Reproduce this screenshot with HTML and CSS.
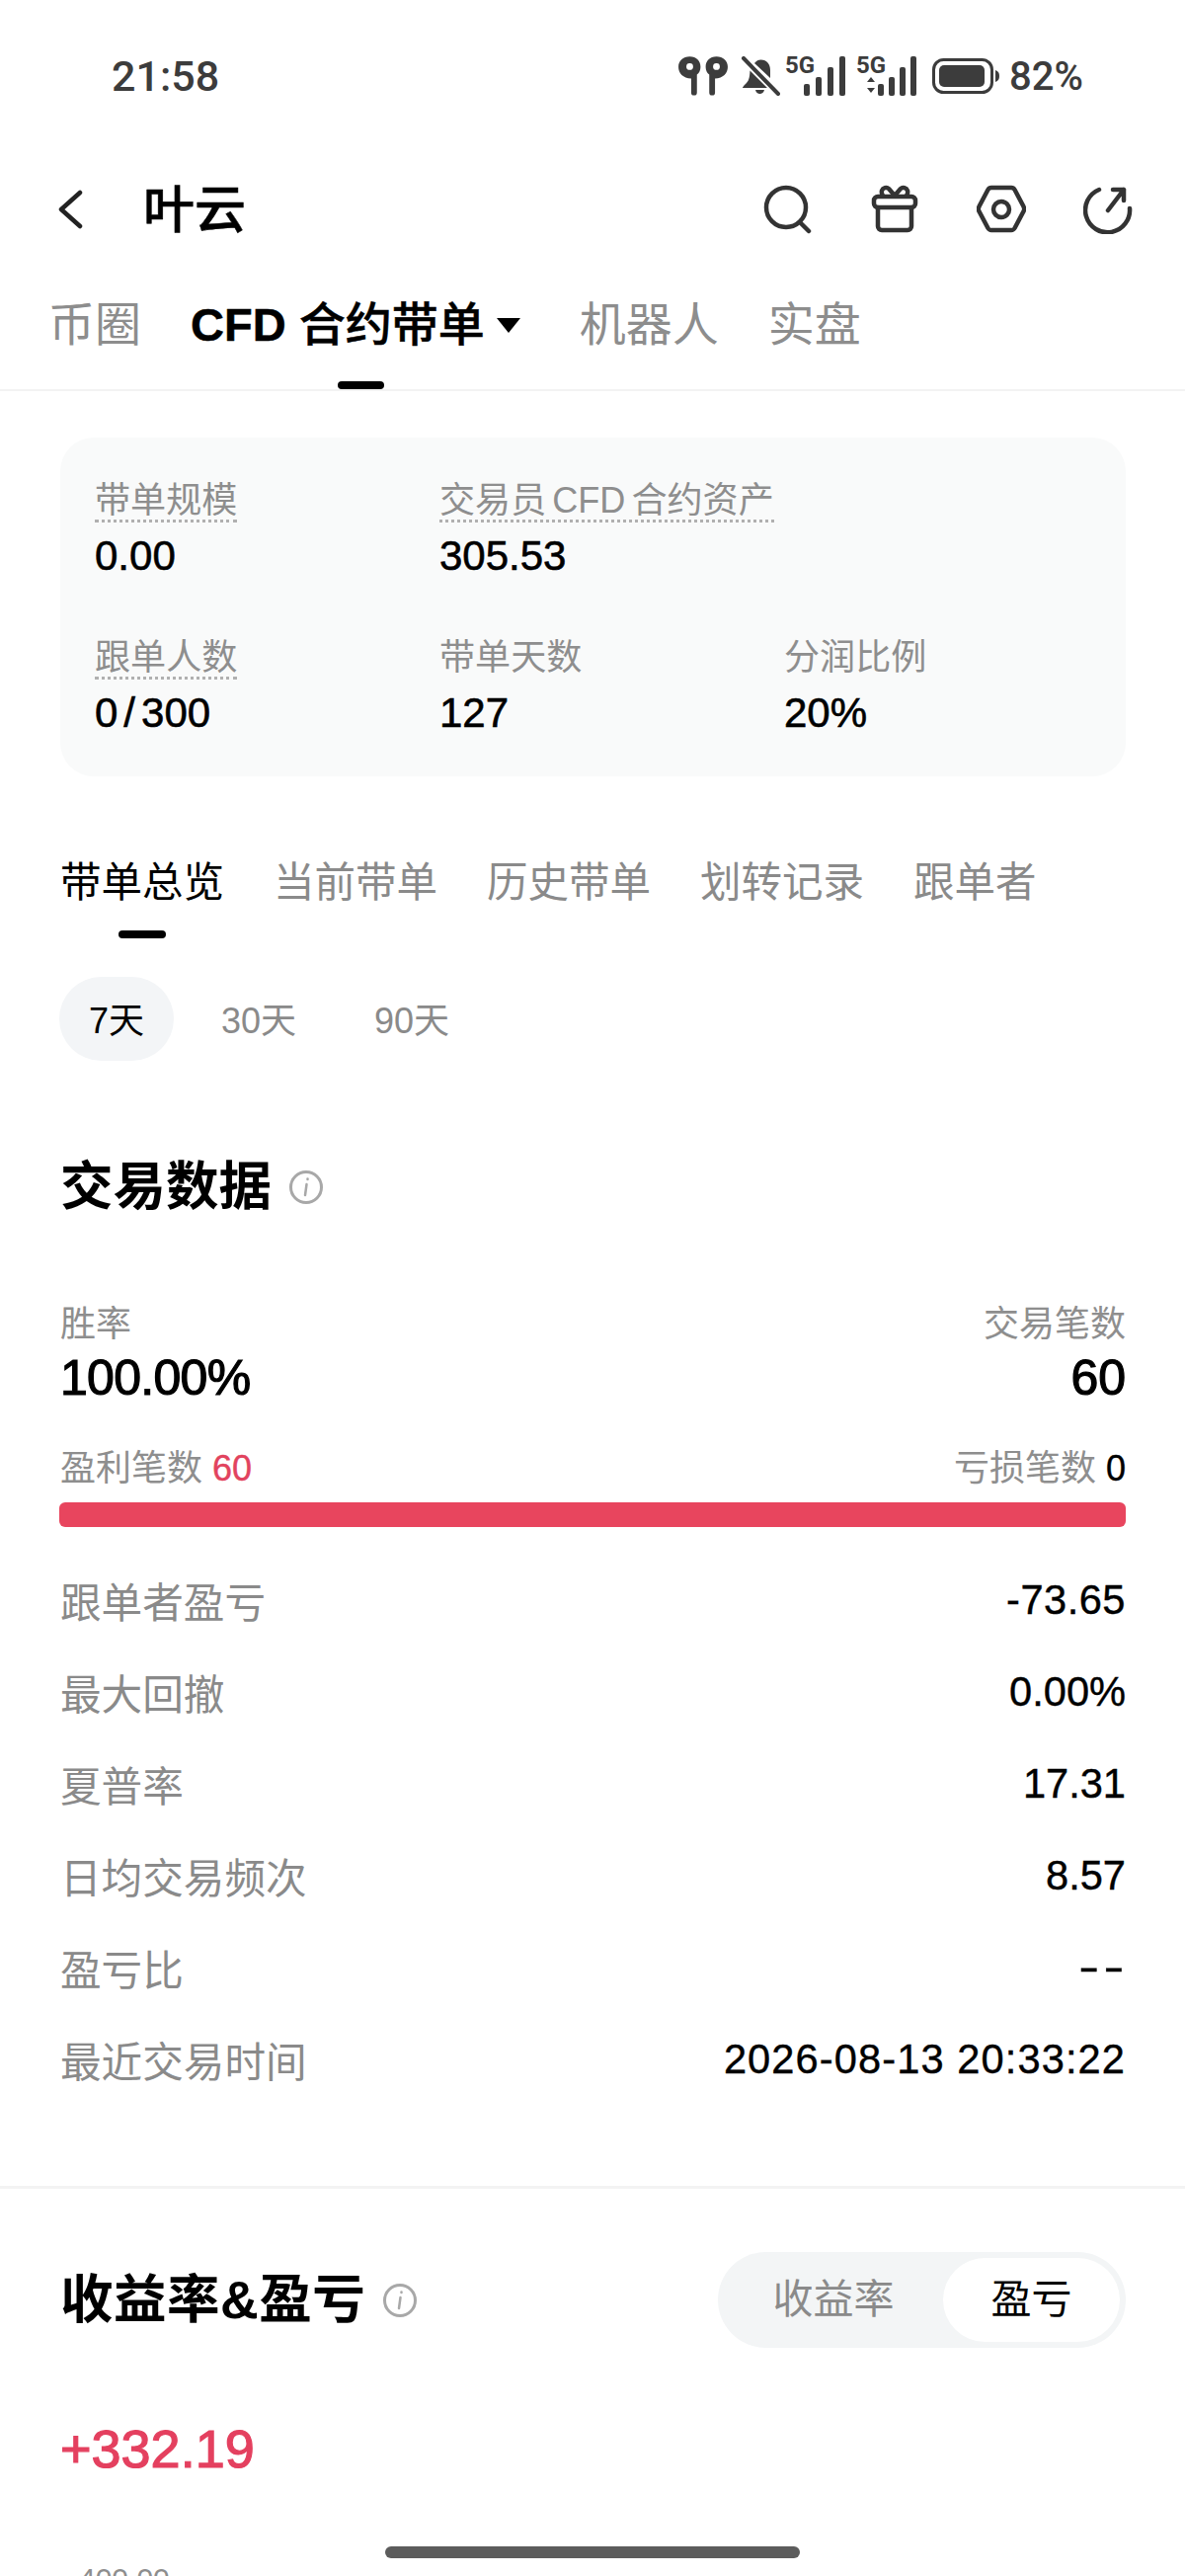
FILE: index.html
```html
<!DOCTYPE html>
<html>
<head>
    <meta charset="utf-8">
    <link rel="stylesheet" href="styles.css">
</head>
<body>
    <main class="page">
        <div class="status">
            <span class="time">21:58</span>
            <div class="status-icons">
                <svg class="pods" viewBox="0 0 50 38">
                    <path fill="#3c3c3c" fill-rule="evenodd" d="M12 0c6.500 0 10.500 4.500 10.500 10 0 3.500-1.500 6-3.500 7.500V35a2.800 2.800 0 0 1-5.600 0V21.500C5.500 21 1 16 1 10 1 4.500 5.500 0 12 0zm0 6.500a3.300 3.300 0 1 0 0 6.600 3.300 3.300 0 0 0 0-6.600z"/>
                    <path fill="#3c3c3c" fill-rule="evenodd" d="M38 0c-6.500 0-10.500 4.500-10.500 10 0 3.500 1.500 6 3.500 7.500V35a2.800 2.800 0 0 0 5.600 0V21.500C44.500 21 49 16 49 10 49 4.500 44.500 0 38 0zm0 6.500a3.300 3.300 0 1 1 0 6.600 3.300 3.300 0 0 1 0-6.600z"/>
                </svg>
                <svg class="bell" viewBox="0 0 40 40">
                    <path fill="#3c3c3c" d="M14 7c2-2.500 4-3.500 6.500-3.500C26.500 3.500 30 8 30 14v8zM9.500 14.500 27 32H2c0-1 1-2 3-4 3-3 4-5 4.500-13.500zM15 34h9c-.5 2.500-2.500 4-4.500 4S15.500 36.500 15 34z"/>
                    <path stroke="#3c3c3c" stroke-width="4" stroke-linecap="round" d="M3 2l35 36"/>
                </svg>
                <div class="signal">
                    <span class="net">5G</span>
                    <svg class="bars" viewBox="0 0 42 40">
                        <rect x="0" y="28" width="6" height="12" rx="2" fill="#3c3c3c"/>
                        <rect x="12" y="21" width="6" height="19" rx="2" fill="#3c3c3c"/>
                        <rect x="24" y="11" width="6" height="29" rx="2" fill="#3c3c3c"/>
                        <rect x="36" y="0" width="6" height="40" rx="2" fill="#3c3c3c"/>
                    </svg>
                </div>
                <div class="signal">
                    <span class="net">5G</span>
                    <svg class="bars bars-data" viewBox="0 0 50 40">
                        <path d="M0 26l4-5 4 5zM0 32l4 5 4-5z" fill="#3c3c3c"/>
                        <rect x="11" y="28" width="6" height="12" rx="2" fill="#3c3c3c"/>
                        <rect x="22" y="21" width="6" height="19" rx="2" fill="#3c3c3c"/>
                        <rect x="33" y="11" width="6" height="29" rx="2" fill="#3c3c3c"/>
                        <rect x="44" y="0" width="6" height="40" rx="2" fill="#3c3c3c"/>
                    </svg>
                </div>
                <svg class="battery" viewBox="0 0 68 36">
                    <rect x="1.500" y="1.500" width="59" height="33" rx="10" fill="none" stroke="#3c3c3c" stroke-width="3"/>
                    <rect x="7" y="7" width="46" height="22" rx="5" fill="#3c3c3c"/>
                    <path d="M64 12c3 1 4 3 4 6s-1 5-4 6z" fill="#3c3c3c"/>
                </svg>
                <span class="percent">82%</span>
            </div>
        </div>

        <div class="nav">
            <svg class="back" viewBox="0 0 26 44">
                <path d="M23 5 4 22l19 17" fill="none" stroke="#222" stroke-width="4.500" stroke-linecap="round" stroke-linejoin="round"/>
            </svg>
            <h1 class="trader">叶云</h1>
            <div class="nav-icons">
                <svg viewBox="0 0 50 50"><circle cx="23" cy="23" r="20" class="line"/><path d="M37 38l9 9" class="line"/></svg>
                <svg viewBox="0 0 50 50"><rect x="4" y="12" width="42" height="11" rx="4" class="line"/><path d="M8 23v19a4 4 0 0 0 4 4h26a4 4 0 0 0 4-4V23M25 11l-6-7c-2-2-6-1-7 2-.5 2 0 3.500 1 5M25 11l6-7c2-2 6-1 7 2 .5 2 0 3.500-1 5" class="line"/></svg>
                <svg viewBox="0 0 50 50"><path d="M15 3h20a4 4 0 0 1 3.500 2l9 17a5 5 0 0 1 0 5l-9 17a4 4 0 0 1-3.500 2H15a4 4 0 0 1-3.500-2l-9-17a5 5 0 0 1 0-5l9-17A4 4 0 0 1 15 3z" class="line"/><circle cx="25" cy="25" r="8" class="line"/></svg>
                <svg viewBox="0 0 50 50"><path d="M16 5A22.500 22.500 0 1 0 47 24M25 26 41 5M30 5h11v11" class="line"/></svg>
            </div>
        </div>

        <div class="tabs">
            <span class="tab">币圈</span>
            <span class="tab tab-active"><span class="tab-text"><b>CFD</b> 合约带单</span><i class="caret"></i></span>
            <span class="tab">机器人</span>
            <span class="tab">实盘</span>
        </div>

        <section class="card">
            <div class="stat">
                <span class="stat-label dotted">带单规模</span>
                <span class="stat-value">0.00</span>
            </div>
            <div class="stat">
                <span class="stat-label dotted tight-words">交易员 CFD 合约资产</span>
                <span class="stat-value">305.53</span>
            </div>
            <div class="stat"></div>
            <div class="stat">
                <span class="stat-label dotted">跟单人数</span>
                <span class="stat-value">0<span class="slash">/</span>300</span>
            </div>
            <div class="stat">
                <span class="stat-label">带单天数</span>
                <span class="stat-value">127</span>
            </div>
            <div class="stat">
                <span class="stat-label">分润比例</span>
                <span class="stat-value">20%</span>
            </div>
        </section>

        <div class="subtabs">
            <span class="subtab subtab-active">带单总览</span>
            <span class="subtab">当前带单</span>
            <span class="subtab">历史带单</span>
            <span class="subtab">划转记录</span>
            <span class="subtab">跟单者</span>
        </div>

        <div class="periods">
            <span class="period period-active">7天</span>
            <span class="period">30天</span>
            <span class="period">90天</span>
        </div>

        <section class="trade">
            <h2 class="section-title">交易数据
                <svg class="info" viewBox="0 0 36 36"><circle cx="18" cy="18" r="15.500" fill="none" stroke="#a8a8a8" stroke-width="3"/><path d="M19.500 9.500v.5M18.500 15l-1.500 11" stroke="#a8a8a8" stroke-width="2.500" stroke-linecap="round"/></svg>
            </h2>

            <div class="headline">
                <div>
                    <div class="muted">胜率</div>
                    <div class="big big-rate">100.00%</div>
                </div>
                <div class="right">
                    <div class="muted">交易笔数</div>
                    <div class="big">60</div>
                </div>
            </div>

            <div class="split">
                <span class="muted">盈利笔数 <b class="win">60</b></span>
                <span class="muted">亏损笔数 <b class="loss">0</b></span>
            </div>
            <div class="bar"></div>

            <div class="rows">
                <div class="row"><span>跟单者盈亏</span><b class="spaced">-73.65</b></div>
                <div class="row"><span>最大回撤</span><b>0.00%</b></div>
                <div class="row"><span>夏普率</span><b>17.31</b></div>
                <div class="row"><span>日均交易频次</span><b>8.57</b></div>
                <div class="row"><span>盈亏比</span><b class="dashes">--</b></div>
                <div class="row"><span>最近交易时间</span><b class="spaced-time">2026-08-13 20:33:22</b></div>
            </div>
        </section>

        <section class="profit">
            <div class="profit-head">
                <h2 class="section-title title-wide">收益率&amp;盈亏
                    <svg class="info" viewBox="0 0 36 36"><circle cx="18" cy="18" r="15.500" fill="none" stroke="#a8a8a8" stroke-width="3"/><path d="M19.500 9.500v.5M18.500 15l-1.500 11" stroke="#a8a8a8" stroke-width="2.500" stroke-linecap="round"/></svg>
                </h2>
                <div class="toggle">
                    <span class="toggle-item">收益率</span>
                    <span class="toggle-item toggle-on">盈亏</span>
                </div>
            </div>
            <div class="amount">+332.19</div>
            <div class="axis">400.00</div>
        </section>

        <div class="home-bar"></div>
    </main>
</body>
</html>
```

FILE: styles.css
```css
* {
    box-sizing: border-box;
}
html, body {
    margin: 0;
    background: #fff;
}
.page {
    position: relative;
    width: 1200px;
    height: 2608px;
    overflow: hidden;
    font-family: "Liberation Sans", "Noto Sans CJK SC", sans-serif;
    color: #000;
}

/* status bar */
.status {
    height: 154px;
    padding: 0 103px 0 113px;
    display: flex;
    align-items: center;
    justify-content: space-between;
    color: #3c3c3c;
}
.time {
    font-family: Roboto, sans-serif;
    font-size: 43px;
    font-weight: 500;
}
.status-icons {
    display: flex;
    align-items: center;
}
.pods {
    width: 52px;
    height: 40px;
    margin-right: 12px;
}
.bell {
    width: 40px;
    height: 40px;
    margin-right: 5px;
}
.signal {
    display: flex;
    align-items: flex-end;
    height: 40px;
    position: relative;
    width: 61px;
    margin-right: 11px;
}
.net {
    font-family: Roboto, sans-serif;
    font-size: 24px;
    font-weight: 700;
    line-height: 20px;
    position: absolute;
    left: 0;
    top: -1px;
}
.bars {
    width: 42px;
    height: 40px;
    margin-left: auto;
}
.signal .bars-data {
    width: 50px;
}
.battery {
    width: 68px;
    height: 36px;
    margin-left: 5px;
    margin-right: 10px;
}
.percent {
    font-family: Roboto, sans-serif;
    font-size: 40px;
    font-weight: 500;
}

/* nav */
.nav {
    height: 116px;
    padding: 0 53px 0 58px;
    display: flex;
    align-items: center;
}
.back {
    width: 26px;
    height: 44px;
}
.trader {
    margin: 0 0 8px 61px;
    font-size: 52px;
    font-weight: 500;
    flex: 1;
    -webkit-text-stroke: .5px #000;
}
.nav-icons {
    display: flex;
    gap: 58px;
    padding-left: 2px;
}
.nav-icons svg {
    width: 50px;
    height: 50px;
}
.line {
    fill: none;
    stroke: #333;
    stroke-width: 4.500;
    stroke-linecap: round;
    stroke-linejoin: round;
}

/* top tabs */
.tabs {
    height: 126px;
    padding: 0 0 6px 49px;
    display: flex;
    align-items: center;
    gap: 50px;
    border-bottom: 2px solid #f3f3f3;
}
.tab {
    font-size: 47px;
    color: #8d8d8d;
    line-height: 60px;
}
.tab-active {
    position: relative;
    color: #000;
    display: flex;
    align-items: center;
}
.tab-text {
    font-weight: 500;
    -webkit-text-stroke: .5px #000;
}
.tab-active::after {
    content: "";
    position: absolute;
    left: 149px;
    top: 87px;
    width: 47px;
    height: 8px;
    border-radius: 4px;
    background: #000;
}
.caret {
    margin-left: 12px;
    border-left: 12px solid transparent;
    border-right: 12px solid transparent;
    border-top: 15px solid #000;
    margin-right: 10px;
}

/* summary card */
.card {
    margin: 47px 60px 0 61px;
    height: 343px;
    padding: 45px 35px 0;
    background: #f9fafa;
    border-radius: 34px;
    display: grid;
    grid-template-columns: repeat(3, 349px);
    grid-auto-rows: 159px;
}
.stat {
    display: flex;
    flex-direction: column;
    align-items: flex-start;
}
.stat-label {
    font-size: 36.100px;
    line-height: 38px;
    color: #8e8e8e;
    border-bottom: 3px solid transparent;
}
.dotted {
    border-bottom: 3px dotted #b0b0b0;
}
.tight-words {
    word-spacing: -4px;
}
.stat-value {
    font-size: 42px;
    line-height: 56px;
    margin-top: 6px;
    -webkit-text-stroke: .6px #000;
}
.slash {
    margin: 0 6px;
}

/* sub tabs */
.subtabs {
    margin-top: 78px;
    padding-left: 61px;
    height: 95px;
    display: flex;
    gap: 50px;
    line-height: 60px;
}
.subtab {
    position: relative;
    font-size: 41.500px;
    color: #8a8a8a;
    height: 60px;
}
.subtab-active {
    color: #000;
}
.subtab-active::after {
    content: "";
    position: absolute;
    left: 59px;
    top: 78px;
    width: 48px;
    height: 8px;
    border-radius: 4px;
    background: #000;
}

.periods {
    margin-top: 30px;
    padding-left: 60px;
    display: flex;
    gap: 48px;
}
.period {
    height: 85px;
    line-height: 89px;
    font-size: 36px;
    color: #8a8a8a;
}
.period-active {
    width: 116px;
    text-align: center;
    border-radius: 43px;
    background: #f3f5f7;
    color: #000;
}
.period:nth-child(3) {
    margin-left: 31px;
}

/* trade data */
.trade {
    padding: 0 60px 0 61px;
}
.section-title {
    margin: 0;
    font-size: 53.500px;
    font-weight: 700;
    line-height: 70px;
    display: flex;
    align-items: center;
    gap: 17px;
}
.title-wide {
    letter-spacing: .5px;
}
.trade > .section-title {
    margin-top: 93px;
}
.info {
    width: 36px;
    height: 36px;
}
.headline {
    margin-top: 81px;
    display: flex;
    justify-content: space-between;
}
.right {
    text-align: right;
}
.muted {
    font-size: 36px;
    line-height: 46px;
    color: #8e8e8e;
}
.big {
    font-size: 50px;
    line-height: 62px;
    -webkit-text-stroke: 1.200px #000;
}
.big-rate {
    letter-spacing: -.7px;
}
.split {
    margin-top: 38px;
    display: flex;
    justify-content: space-between;
}
.split b {
    font-weight: 400;
    -webkit-text-stroke: .4px;
}
.win {
    color: #e2435e;
}
.loss {
    color: #000;
}
.bar {
    margin: 11px 0 0 -1px;
    height: 25px;
    border-radius: 6px;
    background: #e8455e;
}
.rows {
    margin-top: 27px;
}
.row {
    height: 93px;
    display: flex;
    align-items: center;
    justify-content: space-between;
    font-size: 41.600px;
    color: #8a8a8a;
}
.row b {
    font-weight: 400;
    color: #000;
    -webkit-text-stroke: .4px #000;
}
.row .spaced {
    letter-spacing: .5px;
}
.row .spaced-time {
    letter-spacing: 1.100px;
}
.row .dashes {
    display: inline-block;
    letter-spacing: 3px;
    margin-right: -3px;
    transform: scaleX(1.500);
    transform-origin: right center;
}

/* profit */
.profit {
    margin-top: 82px;
    border-top: 3px solid #f3f3f3;
    padding: 64px 60px 0 61px;
}
.profit-head {
    display: flex;
    align-items: center;
    justify-content: space-between;
}
.toggle {
    width: 413px;
    height: 97px;
    padding: 6px;
    border-radius: 49px;
    background: #f3f5f6;
    display: flex;
    font-size: 41px;
    color: #8a8a8a;
}
.toggle-item {
    flex: 1;
    line-height: 85px;
    text-align: center;
}
.toggle-on {
    flex: 0 0 179px;
    background: #fff;
    color: #000;
    border-radius: 43px;
}
.amount {
    margin-top: 68px;
    font-size: 54px;
    line-height: 68px;
    color: #e4405f;
    -webkit-text-stroke: 1.200px #e4405f;
}
.axis {
    margin: 81px 0 0 19px;
    font-size: 30px;
    color: #8e8e8e;
}
.home-bar {
    position: absolute;
    left: 390px;
    top: 2578px;
    width: 420px;
    height: 12px;
    border-radius: 6px;
    background: #5c5c5c;
}
```
